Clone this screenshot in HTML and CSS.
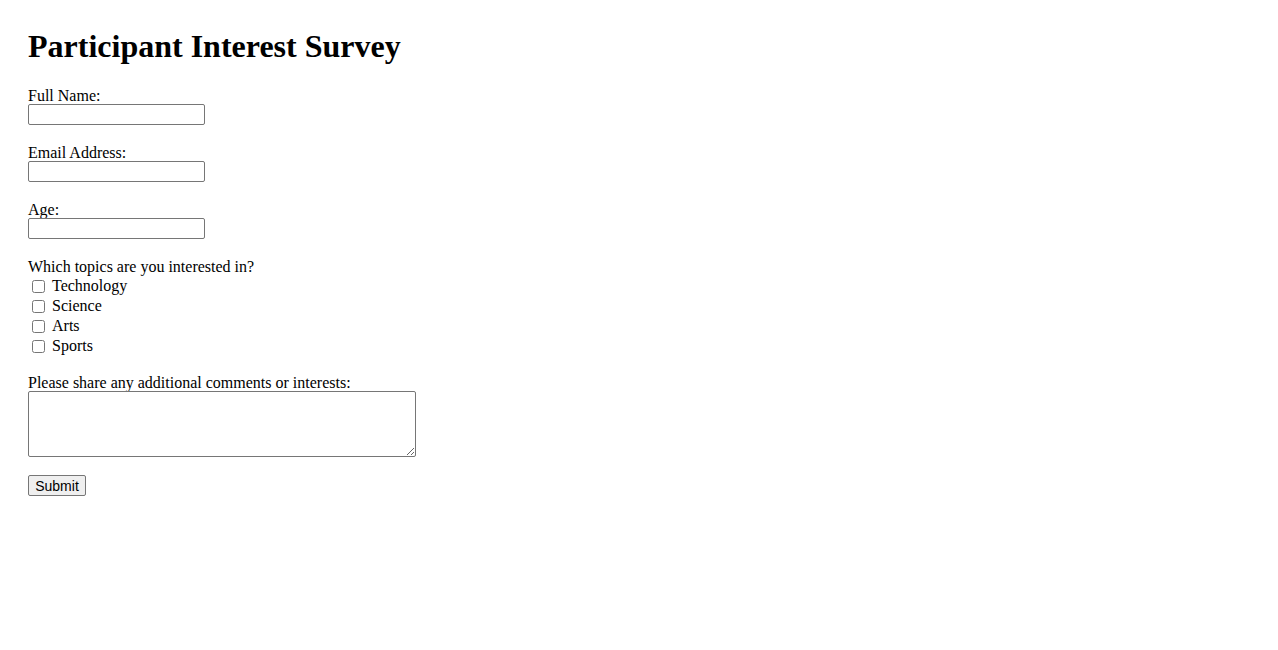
FILE: index.html
```html
<!DOCTYPE html>
<html>
<head>
    <meta charset="UTF-8">
    <title>Participant Interest Survey</title>
    <link rel="stylesheet" href="styles.css">
</head>
<body>
    <h1>Participant Interest Survey</h1>
    <form class="survey">
        <div class="field">
            <label for="name">Full Name:</label>
            <input type="text" id="name" name="name">
        </div>
        <div class="field">
            <label for="email">Email Address:</label>
            <input type="email" id="email" name="email">
        </div>
        <div class="field">
            <label for="age">Age:</label>
            <input type="number" id="age" name="age">
        </div>
        <div class="field topics">
            <span class="question">Which topics are you interested in?</span>
            <label class="check"><input type="checkbox" name="topics" value="technology"> Technology</label>
            <label class="check"><input type="checkbox" name="topics" value="science"> Science</label>
            <label class="check"><input type="checkbox" name="topics" value="arts"> Arts</label>
            <label class="check"><input type="checkbox" name="topics" value="sports"> Sports</label>
        </div>
        <div class="field comments">
            <label for="comments">Please share any additional comments or interests:</label>
            <textarea id="comments" name="comments"></textarea>
        </div>
        <button type="submit" class="submit">Submit</button>
    </form>
</body>
</html>
```

FILE: styles.css
```css
body {
    margin: 0;
    padding: 28px;
    font-family: "Liberation Serif", "Times New Roman", serif;
    font-size: 16px;
    color: #000;
    background: #fff;
}
h1 {
    margin: 0 0 22px 0;
    font-size: 32px;
    line-height: 37px;
    font-weight: bold;
}
.field {
    display: flex;
    flex-direction: column;
    align-items: flex-start;
    margin-bottom: 19px;
}
.field label {
    line-height: 17px;
}
.field .question {
    line-height: 18px;
}
.field input[type="text"],
.field input[type="email"],
.field input[type="number"] {
    box-sizing: border-box;
    width: 177px;
    height: 21px;
    margin: 0;
    padding: 1px 2px;
    border: 1px solid #767676;
    border-radius: 2px;
    font-family: "Liberation Sans", Arial, sans-serif;
    font-size: 13px;
    -moz-appearance: textfield;
}
.field input[type="number"]::-webkit-inner-spin-button,
.field input[type="number"]::-webkit-outer-spin-button {
    -webkit-appearance: none;
    margin: 0;
}
.topics {
    margin-bottom: 18px;
}
.field .check {
    display: flex;
    align-items: center;
    height: 20px;
    line-height: 20px;
}
.field .check input {
    width: 13px;
    height: 13px;
    margin: 0 7px 0 4px;
}
.comments {
    margin-bottom: 18px;
}
.field textarea {
    box-sizing: border-box;
    width: 388px;
    height: 66px;
    margin: 0;
    border: 1px solid #767676;
    border-radius: 2px;
}
.submit {
    box-sizing: border-box;
    width: 58px;
    height: 21px;
    padding: 1px 6px;
    margin: 0;
    border: 1px solid #767676;
    border-radius: 2px;
    background: #efefef;
    font-family: "Liberation Sans", Arial, sans-serif;
    font-size: 14px;
    color: #000;
}
```
